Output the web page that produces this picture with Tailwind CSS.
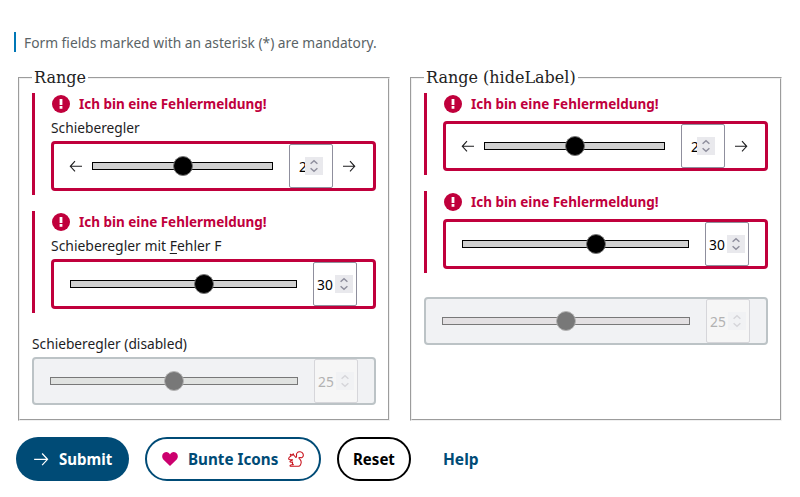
<!DOCTYPE html>
<html lang="de">
<head>
<meta charset="utf-8">
<title>Range</title>
<script src="https://cdn.jsdelivr.net/npm/@tailwindcss/browser@4"></script>
</head>
<body class="bg-white font-['Noto_Sans',sans-serif] text-[15px] leading-5 text-[#1d1d1f] w-[800px] h-[497px] overflow-hidden pt-8">

<svg class="hidden">
  <symbol id="left" viewBox="0 0 14 14"><path d="M13 7.300H1.500M6 2.200 1.300 7.300l4.700 5" fill="none" stroke="currentColor" stroke-width="1.1"/></symbol>
  <symbol id="right" viewBox="0 0 14 14"><path d="M1 7.300h11.500M8 2.200 12.700 7.300l-4.700 5" fill="none" stroke="currentColor" stroke-width="1.1"/></symbol>
  <symbol id="alert" viewBox="0 0 18 18"><circle cx="9" cy="9" r="9" fill="#c0003c"/><path d="M7.600 4h2.800v6H7.600zM7.600 11.100h2.800v2.700H7.600z" fill="#fff"/></symbol>
  <symbol id="spin" viewBox="0 0 18 18"><path d="M5.600 6.700 9 3.700 12.400 6.700M5.600 11.300 9 14.300 12.400 11.300" fill="none" stroke="currentColor" stroke-width="1.5"/></symbol>
</svg>

<p class="ml-3.5 h-5 border-l-2 border-[#0077b6] pl-2 text-[#5a6366]"><span class="inline-block origin-left scale-x-[.918] whitespace-nowrap">Form fields marked with an asterisk (*) are mandatory.</span></p>

<main class="ml-[18px] mt-[17px] flex gap-5">
  <fieldset class="h-[352px] w-[372px] border-2 [border-style:groove] border-[#f0f0f0] px-3 pt-1.5">
    <legend class="px-0.5 font-['DejaVu_Serif',serif] text-base leading-[18px] text-[#222]">Range</legend>

    <div class="h-[102px] border-l-3 border-[#c0003c] pl-4">
      <div class="flex h-[22px] gap-[9px] pl-px font-bold text-[#c0003c]"><svg class="mt-0.5 size-[18px] shrink-0"><use href="#alert"/></svg><span class="inline-block origin-left scale-x-[.899] whitespace-nowrap">Ich bin eine Fehlermeldung!</span></div>
      <label class="mt-0.5 block h-6"><span class="inline-block origin-left scale-x-[.917] whitespace-nowrap">Schieberegler</span></label>
      <div class="flex h-[50px] w-[325px] items-center rounded border-3 border-[#c0003c]">
        <svg class="ml-[15px] size-3.5 shrink-0"><use href="#left"/></svg>
        <div class="relative ml-[9px] h-2 w-[181px] shrink-0 border border-black bg-[#d1d1d1]"><i class="absolute -top-[7px] left-[80px] size-5 rounded-full border border-[#777] bg-black"></i></div>
        <div class="ml-4 flex h-11 w-11 shrink-0 items-center rounded-xs border border-[#8f8f9d] pl-[9px] text-black"><span class="block h-5 w-1.5"><b class="inline-block origin-left scale-x-[.91] font-normal">25</b></span><svg class="relative size-[18px] shrink-0 bg-[#e9e9ed] text-[#8f8f9d]"><use href="#spin"/></svg></div>
        <svg class="ml-[9px] size-3.5 shrink-0"><use href="#right"/></svg>
      </div>
    </div>

    <div class="mt-4 h-[102px] border-l-3 border-[#c0003c] pl-4">
      <div class="flex h-[22px] gap-[9px] pl-px font-bold text-[#c0003c]"><svg class="mt-0.5 size-[18px] shrink-0"><use href="#alert"/></svg><span class="inline-block origin-left scale-x-[.899] whitespace-nowrap">Ich bin eine Fehlermeldung!</span></div>
      <label class="mt-0.5 block h-6"><span class="inline-block origin-left scale-x-[.928] whitespace-nowrap">Schieberegler mit <u class="underline-offset-2">F</u>ehler F</span></label>
      <div class="flex h-[50px] w-[325px] items-center rounded border-3 border-[#c0003c]">
        <div class="relative ml-4 h-2 w-[227px] shrink-0 border border-black bg-[#d1d1d1]"><i class="absolute -top-[7px] left-[123px] size-5 rounded-full border border-[#777] bg-black"></i></div>
        <div class="ml-4 flex h-11 w-11 shrink-0 items-center rounded-xs border border-[#8f8f9d] pl-[3px] text-black"><span class="block w-[18px]"><b class="inline-block origin-left scale-x-[.92] font-normal">30</b></span><svg class="size-[18px] shrink-0 bg-[#e9e9ed] text-[#8f8f9d]"><use href="#spin"/></svg></div>
      </div>
    </div>

    <div class="mt-5">
      <label class="block h-6"><span class="inline-block origin-left scale-x-[.916] whitespace-nowrap">Schieberegler (disabled)</span></label>
      <div class="flex h-12 w-[344px] items-center rounded border-2 border-[#bcc3c6] bg-[#f1f2f4]">
        <div class="relative ml-4 h-2 w-[248px] shrink-0 border border-[#787878] bg-[#e0e2e0]"><i class="absolute -top-[7px] left-[113px] size-5 rounded-full border border-[#b5b5b5] bg-[#787878]"></i></div>
        <div class="ml-4 flex h-11 w-11 shrink-0 items-center rounded-xs border border-[#d6d6da] bg-[#f6f6f6] pl-[3px] text-[#b2b2b2]"><span class="block w-[18px]"><b class="inline-block origin-left scale-x-[.92] font-normal">25</b></span><svg class="size-[18px] shrink-0 bg-[#f1f2f4] text-[#d6d6da]"><use href="#spin"/></svg></div>
      </div>
    </div>
  </fieldset>

  <fieldset class="h-[352px] w-[372px] border-2 [border-style:groove] border-[#f0f0f0] px-3 pt-1.5">
    <legend class="px-0.5 font-['DejaVu_Serif',serif] text-base leading-[18px] text-[#222]">Range (hideLabel)</legend>

    <div class="h-[82px] border-l-3 border-[#c0003c] pl-4">
      <div class="flex h-7 gap-[9px] pl-px font-bold text-[#c0003c]"><svg class="mt-0.5 size-[18px] shrink-0"><use href="#alert"/></svg><span class="inline-block h-5 origin-left scale-x-[.899] whitespace-nowrap">Ich bin eine Fehlermeldung!</span></div>
      <div class="flex h-[50px] w-[325px] items-center rounded border-3 border-[#c0003c]">
        <svg class="ml-[15px] size-3.5 shrink-0"><use href="#left"/></svg>
        <div class="relative ml-[9px] h-2 w-[181px] shrink-0 border border-black bg-[#d1d1d1]"><i class="absolute -top-[7px] left-[80px] size-5 rounded-full border border-[#777] bg-black"></i></div>
        <div class="ml-4 flex h-11 w-11 shrink-0 items-center rounded-xs border border-[#8f8f9d] pl-[9px] text-black"><span class="block h-5 w-1.5"><b class="inline-block origin-left scale-x-[.91] font-normal">25</b></span><svg class="relative size-[18px] shrink-0 bg-[#e9e9ed] text-[#8f8f9d]"><use href="#spin"/></svg></div>
        <svg class="ml-[9px] size-3.5 shrink-0"><use href="#right"/></svg>
      </div>
    </div>

    <div class="mt-4 h-[82px] border-l-3 border-[#c0003c] pl-4">
      <div class="flex h-7 gap-[9px] pl-px font-bold text-[#c0003c]"><svg class="mt-0.5 size-[18px] shrink-0"><use href="#alert"/></svg><span class="inline-block h-5 origin-left scale-x-[.899] whitespace-nowrap">Ich bin eine Fehlermeldung!</span></div>
      <div class="flex h-[50px] w-[325px] items-center rounded border-3 border-[#c0003c]">
        <div class="relative ml-4 h-2 w-[227px] shrink-0 border border-black bg-[#d1d1d1]"><i class="absolute -top-[7px] left-[123px] size-5 rounded-full border border-[#777] bg-black"></i></div>
        <div class="ml-4 flex h-11 w-11 shrink-0 items-center rounded-xs border border-[#8f8f9d] pl-[3px] text-black"><span class="block w-[18px]"><b class="inline-block origin-left scale-x-[.92] font-normal">30</b></span><svg class="size-[18px] shrink-0 bg-[#e9e9ed] text-[#8f8f9d]"><use href="#spin"/></svg></div>
      </div>
    </div>

    <div class="mt-6 flex h-12 w-[344px] items-center rounded border-2 border-[#bcc3c6] bg-[#f1f2f4]">
      <div class="relative ml-4 h-2 w-[248px] shrink-0 border border-[#787878] bg-[#e3e0e2]"><i class="absolute -top-[7px] left-[113px] size-5 rounded-full border border-[#b5b5b5] bg-[#787878]"></i></div>
      <div class="ml-4 flex h-11 w-11 shrink-0 items-center rounded-xs border border-[#d6d6da] bg-[#f6f6f6] pl-[3px] text-[#b2b2b2]"><span class="block w-[18px]"><b class="inline-block origin-left scale-x-[.92] font-normal">25</b></span><svg class="size-[18px] shrink-0 bg-[#f1f2f4] text-[#d6d6da]"><use href="#spin"/></svg></div>
    </div>
  </fieldset>
</main>

<footer class="ml-4 mt-4 flex gap-4 text-base leading-5 font-bold text-[#004b76]">
  <button class="flex h-11 w-[113px] items-center rounded-full bg-[#004b76] pl-[17px] text-left text-white"><svg class="size-4 shrink-0"><use href="#right"/></svg><span class="ml-2.5 inline-block origin-left scale-x-[.94] whitespace-nowrap">Submit</span></button>
  <button class="flex h-11 w-44 items-center rounded-full border-2 border-[#004b76] pl-[15px] text-left">
    <svg class="size-4 shrink-0" viewBox="0 0 16 16"><path d="M8 15 1.300 8.400C-1 5.800.300 1.300 4.200 1.100 6 1.100 7.300 2.200 8 3.500 8.700 2.200 10 1.100 11.800 1.100 15.700 1.300 17 5.800 14.700 8.400z" fill="#cc006e"/></svg>
    <span class="ml-2.5 block w-[100px]"><span class="inline-block origin-left scale-x-[.95] whitespace-nowrap">Bunte Icons</span></span>
    <svg class="size-4 shrink-0" viewBox="0 0 16 16"><path d="M8 6.500C9.500 5.500 7.600 3.600 9 2 10.500.200 14 .400 15 2.800 15.800 4.800 15 6.200 13.600 6.700 12.400 7 11.800 6 11 6.600 10.200 7.500 13.300 8.500 13.200 11.200 13 13.500 12.500 15 10.500 15.300H2.300C1.600 14.300 2.600 13.700 4 13.800L5.400 13.600C4.200 12.800 4.300 11.900 4.600 11 3.400 11.300 2.300 11.600 1.900 10.800 1.900 9.900 3.600 9.900 4.600 8.800 2.800 9 .600 9 .600 7.700.700 6.400 2 5.500 3 5L2.300 3.200 4.400 4.200 5.200 2.800 6 4.600C7 5 7 6 8 6.500z" fill="none" stroke="#c9141e" stroke-width="1.100" stroke-linejoin="round"/></svg>
  </button>
  <button class="flex h-11 w-[74px] items-center rounded-full border-2 border-black pl-3.5 text-left text-black"><span class="inline-block origin-left scale-x-[.94] whitespace-nowrap">Reset</span></button>
  <button class="flex h-11 items-center pl-4 text-left"><span class="inline-block origin-left scale-x-[.97] whitespace-nowrap">Help</span></button>
</footer>
</body>
</html>
